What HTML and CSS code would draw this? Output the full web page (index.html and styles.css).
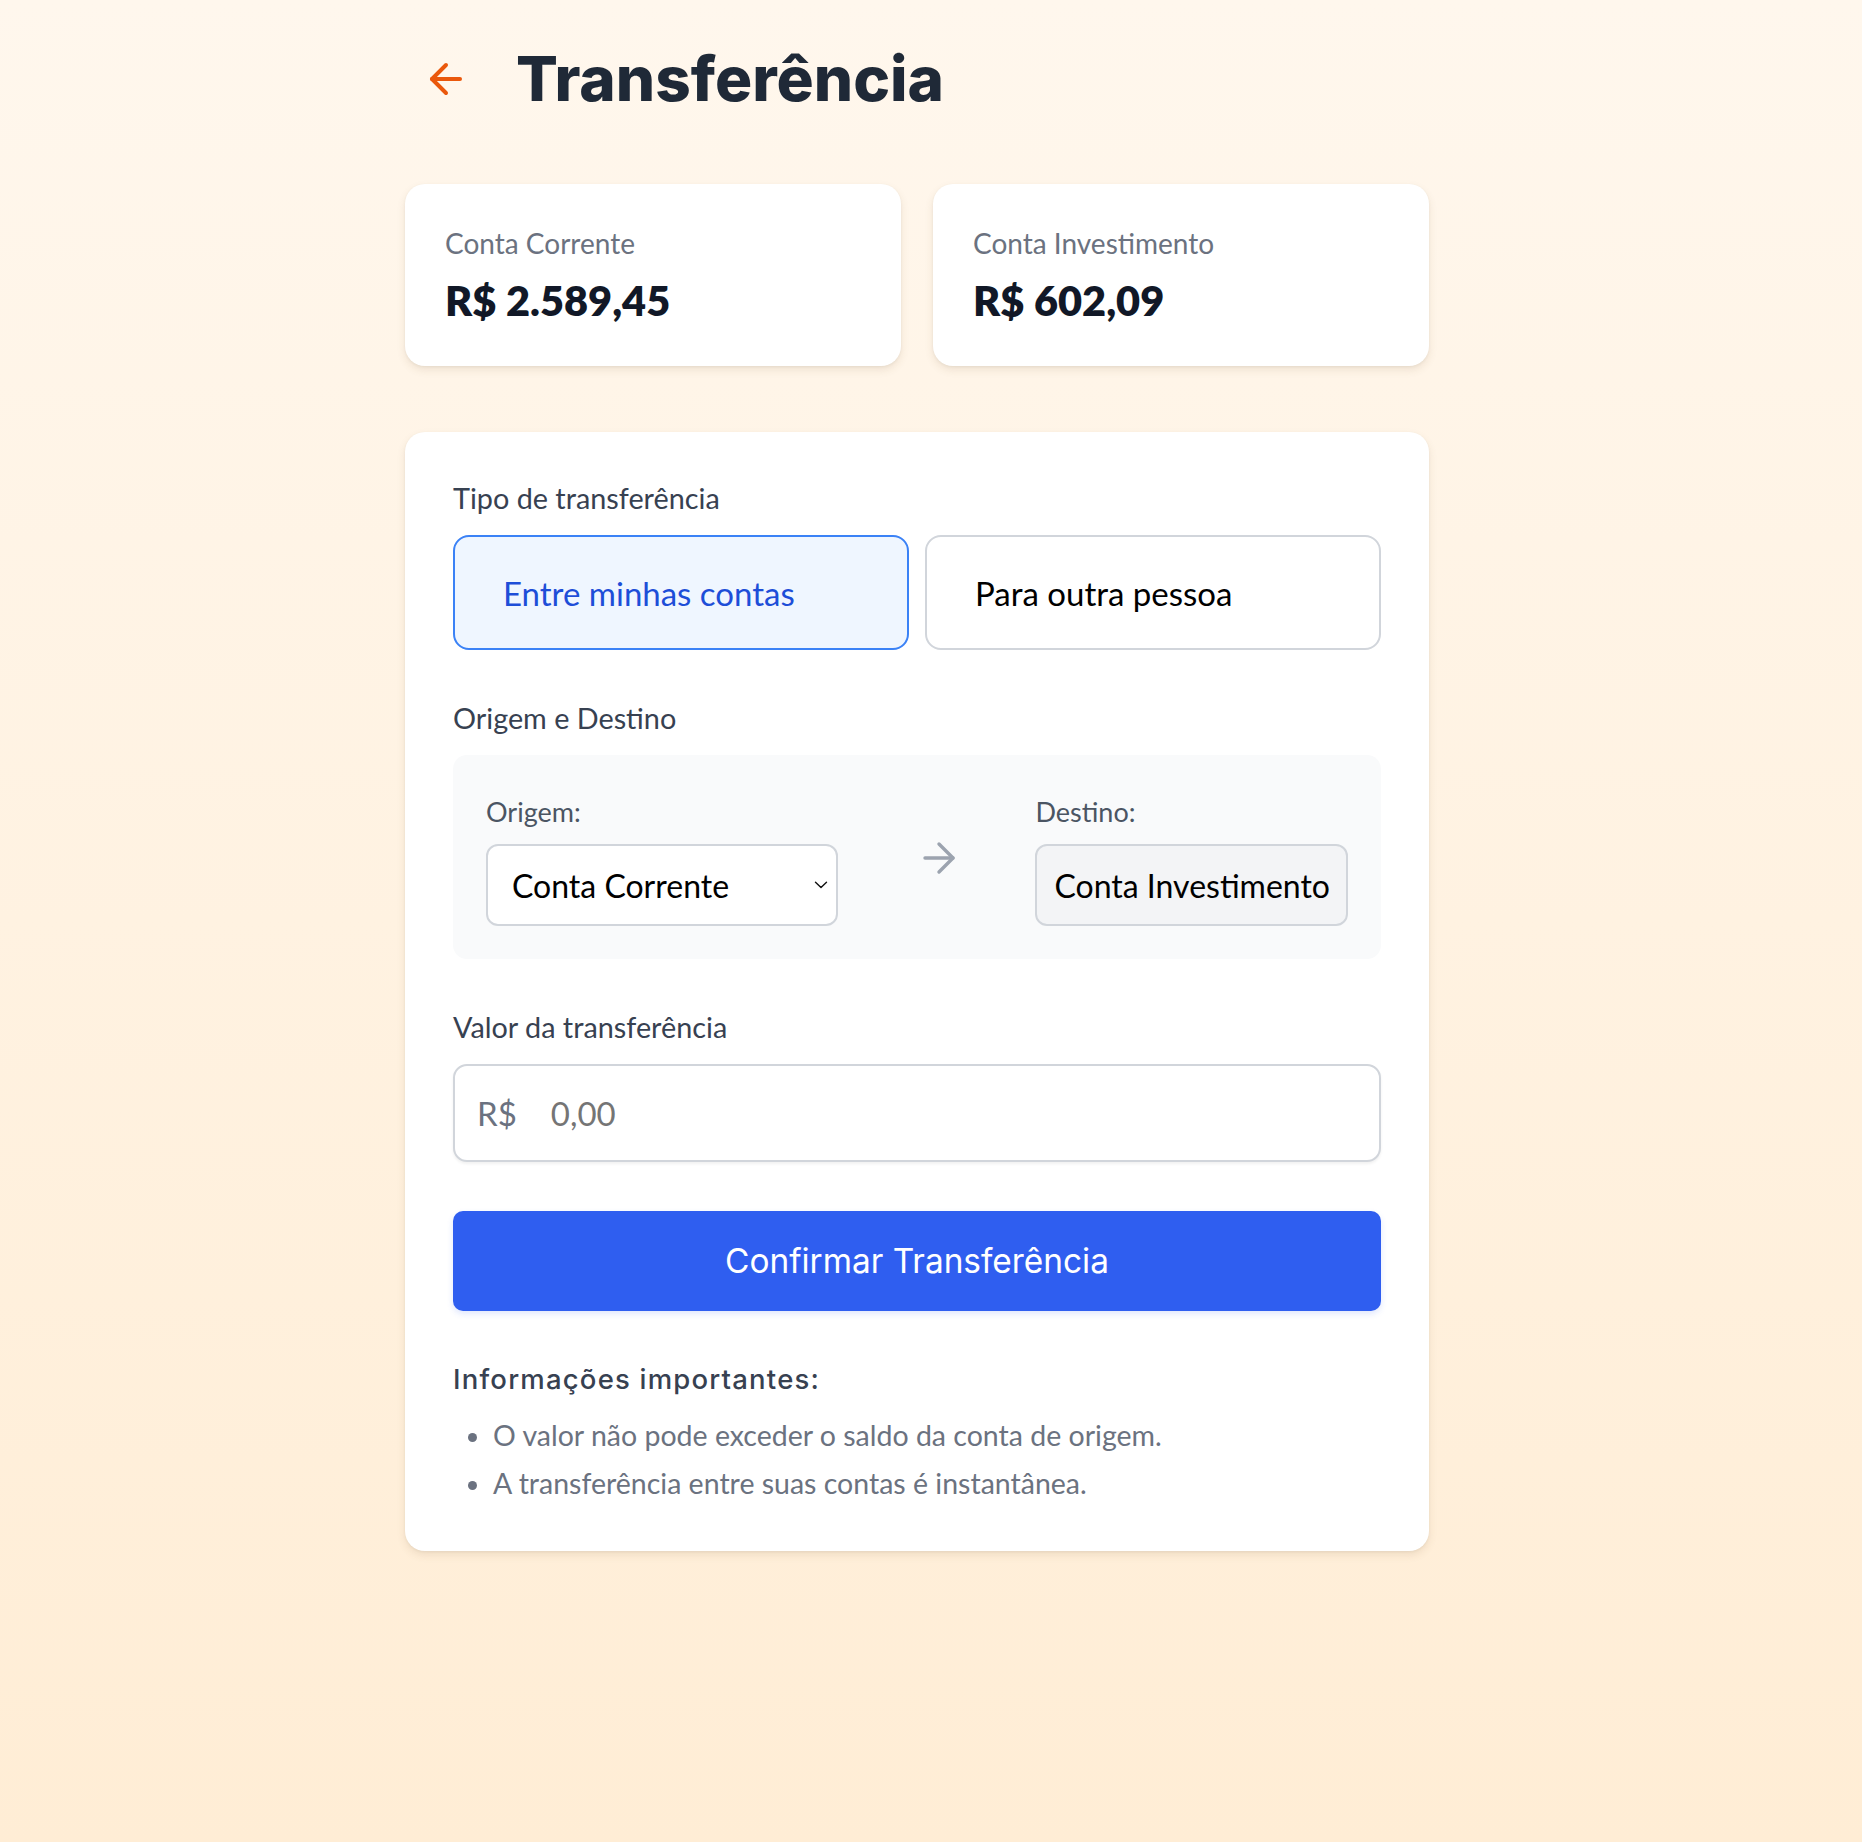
FILE: index.html
```html
<!DOCTYPE html>
<html lang="pt-BR">
<head>
<meta charset="utf-8">
<title>Transferência</title>
<link rel="stylesheet" href="styles.css">
</head>
<body>
<div class="page">
  <div class="container">
    <header class="header">
      <button class="back-btn" aria-label="Voltar">
        <svg class="back-icon" viewBox="0 0 24 24" fill="none" stroke="currentColor" stroke-width="2" stroke-linecap="round" stroke-linejoin="round"><path d="m12 19-7-7 7-7"/><path d="M19 12H5"/></svg>
      </button>
      <h1 class="title">Transferência</h1>
    </header>

    <section class="balances">
      <div class="balance-card">
        <p class="balance-label">Conta Corrente</p>
        <p class="balance-value">R$ 2.589,45</p>
      </div>
      <div class="balance-card">
        <p class="balance-label">Conta Investimento</p>
        <p class="balance-value">R$ 602,09</p>
      </div>
    </section>

    <section class="form-card">
      <div class="field">
        <p class="field-label">Tipo de transferência</p>
        <div class="type-options">
          <button class="type-option type-option-active">Entre minhas contas</button>
          <button class="type-option">Para outra pessoa</button>
        </div>
      </div>

      <div class="field">
        <p class="field-label">Origem e Destino</p>
        <div class="route">
          <div class="route-col">
            <span class="route-label">Origem:</span>
            <div class="select-box">
              <span>Conta Corrente</span>
              <svg class="chevron" viewBox="0 0 14 8" fill="none" stroke="currentColor" stroke-width="1.4" stroke-linecap="round" stroke-linejoin="round"><path d="M1.5 1.2 7 6.6l5.5-5.4"/></svg>
            </div>
          </div>
          <svg class="route-arrow" viewBox="0 0 24 24" fill="none" stroke="currentColor" stroke-width="1.7" stroke-linecap="round" stroke-linejoin="round"><path d="M5 12h14"/><path d="m12 5 7 7-7 7"/></svg>
          <div class="route-col">
            <span class="route-label">Destino:</span>
            <div class="dest-box">Conta Investimento</div>
          </div>
        </div>
      </div>

      <div class="field">
        <p class="field-label">Valor da transferência</p>
        <div class="amount-input">
          <span class="currency">R$</span>
          <span class="placeholder">0,00</span>
        </div>
      </div>

      <button class="confirm-btn">Confirmar Transferência</button>

      <div class="info">
        <h3 class="info-title">Informações importantes:</h3>
        <ul class="info-list">
          <li>O valor não pode exceder o saldo da conta de origem.</li>
          <li>A transferência entre suas contas é instantânea.</li>
        </ul>
      </div>
    </section>
  </div>
</div>
</body>
</html>
```

FILE: styles.css
```css
* { box-sizing: border-box; }

html, body {
  margin: 0;
  padding: 0;
}

body {
  font-family: "Lato", "Noto Sans", sans-serif;
  color: #111827;
}

.page {
  min-height: 100vh;
  background: linear-gradient(to bottom, #fff7ed, #ffedd5);
  padding: 55px 28px 40px 0;
}

.container {
  width: 1024px;
  margin: 0 auto;
}

.header {
  display: flex;
  align-items: center;
  gap: 46px;
  padding-left: 17px;
  height: 48px;
}

.back-btn {
  background: none;
  border: none;
  padding: 0;
  width: 48px;
  height: 48px;
  color: #ea580c;
  cursor: pointer;
  display: flex;
}

.back-icon {
  width: 48px;
  height: 48px;
}

.title {
  margin: 0;
  font-family: "Inter", sans-serif;
  font-weight: 800;
  font-size: 62px;
  line-height: 48px;
  color: #1f2937;
}

.balances {
  margin-top: 81px;
  display: grid;
  grid-template-columns: 1fr 1fr;
  gap: 32px;
}

.balance-card {
  background: #fff;
  border-radius: 20px;
  padding: 38px 40px 42px;
  box-shadow: 0 4px 8px rgba(120, 90, 50, 0.12), 0 1px 3px rgba(0, 0, 0, 0.05);
}

.balance-label {
  margin: 0;
  font-size: 28px;
  line-height: 42px;
  color: #6b7280;
}

.balance-value {
  margin: 12px 0 0;
  font-size: 41.5px;
  line-height: 48px;
  font-weight: 800;
  color: #111827;
}

.form-card {
  margin-top: 66px;
  background: #fff;
  border-radius: 20px;
  padding: 45px 48px 44px;
  box-shadow: 0 4px 8px rgba(120, 90, 50, 0.12), 0 1px 3px rgba(0, 0, 0, 0.05);
}

.field + .field {
  margin-top: 47px;
}

.field-label {
  margin: 0 0 16px;
  font-size: 28.8px;
  line-height: 42px;
  color: #374151;
}

.type-options {
  display: grid;
  grid-template-columns: 1fr 1fr;
  gap: 16px;
}

.type-option {
  height: 115px;
  text-align: left;
  font-family: inherit;
  font-size: 33px;
  color: #000;
  background: #fff;
  border: 2px solid #d1d5db;
  border-radius: 16px;
  padding: 0 0 0 48px;
  cursor: pointer;
}

.type-option-active {
  background: #eff6ff;
  border-color: #3b82f6;
  color: #1d4ed8;
}

.route {
  background: #f9fafb;
  border-radius: 14px;
  padding: 37px 33px 33px;
  display: flex;
  align-items: center;
  justify-content: space-between;
}

.route-col {
  display: flex;
  flex-direction: column;
  gap: 12px;
}

.route-label {
  font-size: 27px;
  line-height: 40px;
  color: #4b5563;
}

.select-box {
  width: 352px;
  height: 82px;
  border: 2px solid #d1d5db;
  border-radius: 12px;
  background: #fff;
  display: flex;
  align-items: center;
  justify-content: space-between;
  padding: 0 8px 0 24px;
  font-size: 32px;
  color: #000;
}

.chevron {
  width: 14px;
  height: 8px;
  color: #111;
}

.route-arrow {
  width: 48px;
  height: 48px;
  color: #9ca3af;
  margin-top: -2px;
  margin-left: 4px;
}

.dest-box {
  height: 82px;
  border: 2px solid #d1d5db;
  border-radius: 12px;
  background: #f3f4f6;
  display: flex;
  align-items: center;
  padding: 0 16px 0 17px;
  font-size: 32px;
  color: #000;
}

.amount-input {
  height: 98px;
  border: 2px solid #d1d5db;
  border-radius: 14px;
  background: #fff;
  display: flex;
  align-items: center;
  gap: 34px;
  padding: 0 22px;
  box-shadow: 0 2px 3px rgba(0, 0, 0, 0.06);
}

.currency {
  font-size: 33px;
  color: #6b7280;
}

.placeholder {
  font-size: 33px;
  color: #757575;
}

.confirm-btn {
  display: block;
  width: 100%;
  height: 100px;
  margin-top: 49px;
  border: none;
  border-radius: 10px;
  background: #2f5ef0;
  color: #fff;
  font-family: "Inter", sans-serif;
  font-weight: 400;
  font-size: 33.4px;
  box-shadow: 0 3px 6px rgba(47, 94, 240, 0.15);
  cursor: pointer;
}

.info {
  margin-top: 50px;
}

.info-title {
  margin: 0;
  font-family: "Inter", sans-serif;
  font-weight: 500;
  font-size: 27.5px;
  letter-spacing: 1.2px;
  line-height: 36px;
  color: #374151;
}

.info-list {
  margin: 14px 0 0;
  padding-left: 40px;
  color: #6b7280;
  font-size: 28.5px;
  line-height: 48px;
}
```
